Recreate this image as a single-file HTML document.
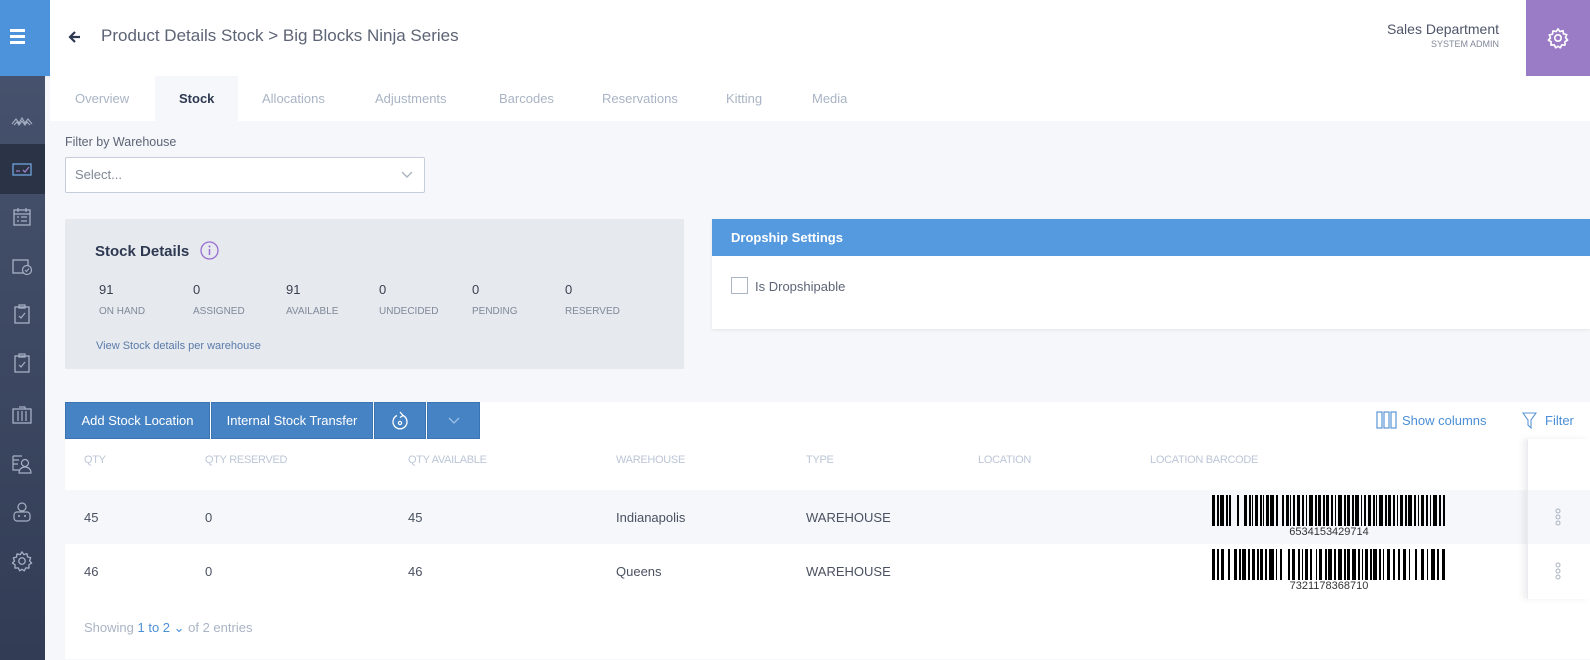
<!DOCTYPE html>
<html><head><meta charset="utf-8">
<style>
*{margin:0;padding:0;box-sizing:border-box}
body{width:1590px;height:660px;overflow:hidden;background:#f5f7fa;font-family:"Liberation Sans",sans-serif;position:relative;color:#4a5160}
.a{position:absolute;white-space:nowrap}
.side{left:0;top:76px;width:45px;height:584px;background:linear-gradient(#46526d,#323c55)}
.ico{position:absolute;left:11px;width:22px;height:22px}
.tab{top:91px;font-size:13px;color:#a9b4c4}
.th{top:454px;font-size:11px;color:#bcc6d6;letter-spacing:-0.3px}
.td{font-size:13px;color:#4a5160}
.lbl{top:306px;font-size:10px;color:#808898}
.val{top:282px;font-size:13px;color:#3a4050}
.btn{top:402px;height:37px;background:#4683c4;color:#fff;font-size:13px;display:flex;align-items:center;justify-content:center;border:1px solid #3a74b3}
</style></head><body>
<!-- header -->
<div class="a" style="left:0;top:0;width:1590px;height:76px;background:#fff;box-shadow:0 2px 4px rgba(0,0,0,.06)"></div>
<div class="a" style="left:0;top:0;width:50px;height:76px;background:#4d93db"></div>
<div class="a" style="left:10px;top:29px;width:15px;height:3px;background:#fff;box-shadow:0 6px 0 #fff,0 12px 0 #fff"></div>
<svg class="a" style="left:68px;top:30px" width="14" height="14" viewBox="0 0 14 14"><path d="M12 7H3M7 2L2 7l5 5" stroke="#2e3850" stroke-width="2.2" fill="none"/></svg>
<div class="a" style="left:101px;top:26px;font-size:17px;color:#5d6475">Product Details Stock &gt; Big Blocks Ninja Series</div>
<div class="a" style="right:91px;top:21px;font-size:14px;color:#4e5568;text-align:right">Sales Department</div>
<div class="a" style="right:91px;top:39px;font-size:9px;color:#808898">SYSTEM ADMIN</div>
<div class="a" style="left:1526px;top:0;width:64px;height:76px;background:#9a7cc6"></div>
<svg class="a" style="left:1547px;top:27px" width="22" height="22" viewBox="0 0 24 24"><path d="M12 2l2 3 3.5-1 .5 3.5 3.5.8-1.3 3.4 2.3 2.6-3 1.8.2 3.6-3.6-.2-1.6 3.2L12 21l-2.5 1.7-1.6-3.2-3.6.2.2-3.6-3-1.8L3.8 12 2.5 8.6 6 7.8 6.5 4.3 10 5z" fill="none" stroke="#fff" stroke-width="1.8" stroke-linejoin="round"/><circle cx="12" cy="12" r="3.5" fill="none" stroke="#fff" stroke-width="1.8"/></svg>
<!-- sidebar -->
<div class="a side"></div>
<div class="a" style="left:0;top:144px;width:45px;height:50px;background:#2b3347"></div>
<svg class="ico" style="top:110px" viewBox="0 0 22 22"><path d="M1 14l4-5 3 4 3-5 3 5 3-4 4 5M3 15l3-3 2 3 3-4 3 4 2-3 3 3" stroke="#a6b0c4" stroke-width="1.1" fill="none"/></svg>
<svg class="ico" style="top:158px" viewBox="0 0 22 22"><rect x="2" y="6" width="18" height="11" fill="none" stroke="#6fa3de" stroke-width="1.3"/><path d="M5 13h4M12 12l2 2 4-5" stroke="#9a7cc6" stroke-width="1.3" fill="none"/></svg>
<svg class="ico" style="top:206px" viewBox="0 0 22 22"><rect x="3" y="4" width="16" height="15" fill="none" stroke="#a6b0c4" stroke-width="1.3"/><path d="M3 8h16M7 2v4M15 2v4M6 11h2M10 11h6M6 15h2M10 15h6" stroke="#a6b0c4" stroke-width="1.2"/></svg>
<svg class="ico" style="top:255px" viewBox="0 0 22 22"><rect x="2" y="5" width="15" height="13" fill="none" stroke="#a6b0c4" stroke-width="1.3"/><circle cx="16" cy="15" r="4.5" fill="#3e4a64" stroke="#a6b0c4" stroke-width="1.2"/><path d="M14 15l1.5 1.5 2.5-3" stroke="#a6b0c4" fill="none"/></svg>
<svg class="ico" style="top:303px" viewBox="0 0 22 22"><rect x="4" y="4" width="14" height="16" fill="none" stroke="#a6b0c4" stroke-width="1.3"/><path d="M8 2h6v3H8zM8 13l2 2 4-5" stroke="#a6b0c4" stroke-width="1.2" fill="none"/></svg>
<svg class="ico" style="top:352px" viewBox="0 0 22 22"><rect x="4" y="4" width="14" height="16" fill="none" stroke="#a6b0c4" stroke-width="1.3"/><path d="M8 2h6v3H8zM8 13l2 2 4-5" stroke="#a6b0c4" stroke-width="1.2" fill="none"/></svg>
<svg class="ico" style="top:404px" viewBox="0 0 22 22"><rect x="2" y="5" width="18" height="14" fill="none" stroke="#a6b0c4" stroke-width="1.3"/><path d="M8 3h6v2M7 7v10M11 7v10M15 7v10" stroke="#a6b0c4" stroke-width="1.2" fill="none"/></svg>
<svg class="ico" style="top:453px" viewBox="0 0 22 22"><path d="M2 3h9M2 3v14h6M2 7h6M2 11h5" stroke="#a6b0c4" stroke-width="1.2" fill="none"/><circle cx="14" cy="10" r="3.5" fill="none" stroke="#a6b0c4" stroke-width="1.2"/><path d="M8 20c0-4 3-6 6-6s6 2 6 6z" fill="none" stroke="#a6b0c4" stroke-width="1.2"/></svg>
<svg class="ico" style="top:501px" viewBox="0 0 22 22"><circle cx="11" cy="6" r="4" fill="none" stroke="#a6b0c4" stroke-width="1.2"/><rect x="3" y="11" width="16" height="9" rx="3" fill="none" stroke="#a6b0c4" stroke-width="1.2"/><path d="M7 15h2M13 15h2" stroke="#a6b0c4" stroke-width="1.4"/></svg>
<svg class="ico" style="top:550px" viewBox="0 0 24 24"><path d="M12 2l2 3 3.5-1 .5 3.5 3.5.8-1.3 3.4 2.3 2.6-3 1.8.2 3.6-3.6-.2-1.6 3.2L12 21l-2.5 1.7-1.6-3.2-3.6.2.2-3.6-3-1.8L3.8 12 2.5 8.6 6 7.8 6.5 4.3 10 5z" fill="none" stroke="#a6b0c4" stroke-width="1.4" stroke-linejoin="round"/><circle cx="12" cy="12" r="3.5" fill="none" stroke="#a6b0c4" stroke-width="1.4"/></svg>
<!-- tabs -->
<div class="a" style="left:50px;top:76px;width:1540px;height:45px;background:#fff"></div>
<div class="a" style="left:155px;top:76px;width:83px;height:45px;background:#f5f7fa"></div>
<div class="a tab" style="left:75px">Overview</div>
<div class="a tab" style="left:179px;color:#2e3850;font-weight:bold">Stock</div>
<div class="a tab" style="left:262px">Allocations</div>
<div class="a tab" style="left:375px">Adjustments</div>
<div class="a tab" style="left:499px">Barcodes</div>
<div class="a tab" style="left:602px">Reservations</div>
<div class="a tab" style="left:726px">Kitting</div>
<div class="a tab" style="left:812px">Media</div>
<!-- filter -->
<div class="a" style="left:65px;top:135px;font-size:12.5px;color:#5d6475">Filter by Warehouse</div>
<div class="a" style="left:65px;top:157px;width:360px;height:36px;background:#fff;border:1px solid #c4cdd9;border-radius:2px"></div>
<div class="a" style="left:75px;top:167px;font-size:13px;color:#7f8796">Select...</div>
<svg class="a" style="left:401px;top:171px" width="12" height="8"><path d="M1 1l5 5 5-5" stroke="#aab3c0" stroke-width="1.4" fill="none"/></svg>
<!-- stock details -->
<div class="a" style="left:65px;top:219px;width:619px;height:150px;background:#e6eaef"></div>
<div class="a" style="left:95px;top:243px;font-size:15px;font-weight:bold;color:#2e3850">Stock Details</div>
<svg class="a" style="left:200px;top:241px" width="19" height="19"><circle cx="9.5" cy="9.5" r="8.5" fill="none" stroke="#9a6fd0" stroke-width="1.3"/><path d="M9.5 8v6" stroke="#9a6fd0" stroke-width="1.5"/><circle cx="9.5" cy="5.5" r="1" fill="#9a6fd0"/></svg>
<div class="a val" style="left:99px">91</div><div class="a lbl" style="left:99px">ON HAND</div>
<div class="a val" style="left:193px">0</div><div class="a lbl" style="left:193px">ASSIGNED</div>
<div class="a val" style="left:286px">91</div><div class="a lbl" style="left:286px">AVAILABLE</div>
<div class="a val" style="left:379px">0</div><div class="a lbl" style="left:379px">UNDECIDED</div>
<div class="a val" style="left:472px">0</div><div class="a lbl" style="left:472px">PENDING</div>
<div class="a val" style="left:565px">0</div><div class="a lbl" style="left:565px">RESERVED</div>
<div class="a" style="left:96px;top:340px;font-size:11px;color:#5a7aa8">View Stock details per warehouse</div>
<!-- dropship -->
<div class="a" style="left:712px;top:219px;width:878px;height:110px;background:#fff;box-shadow:0 1px 3px rgba(0,0,0,.08)"></div>
<div class="a" style="left:712px;top:219px;width:878px;height:37px;background:#559ade"></div>
<div class="a" style="left:731px;top:230px;font-size:13px;font-weight:bold;color:#fff">Dropship Settings</div>
<div class="a" style="left:731px;top:277px;width:17px;height:17px;border:1px solid #a9b4c4;background:#fff"></div>
<div class="a" style="left:755px;top:279px;font-size:13px;color:#5d6475">Is Dropshipable</div>
<!-- toolbar -->
<div class="a" style="left:65px;top:402px;width:1525px;height:37px;background:#fff"></div>
<div class="a btn" style="left:65px;width:145px">Add Stock Location</div>
<div class="a btn" style="left:211px;width:162px">Internal Stock Transfer</div>
<div class="a btn" style="left:374px;width:52px"><svg width="20" height="22" viewBox="0 0 20 22"><path d="M13 5.5A7 7 0 1 1 7 5.5" stroke="#fff" stroke-width="1.3" fill="none"/><path d="M10 2l3 3.5-3 2" stroke="#fff" stroke-width="1.3" fill="none"/><circle cx="10" cy="13" r="1.6" fill="none" stroke="#fff" stroke-width="1.2"/></svg></div>
<div class="a btn" style="left:427px;width:53px"><svg width="12" height="8"><path d="M1 1l5 5 5-5" stroke="#9fc0e6" stroke-width="1.3" fill="none"/></svg></div>
<svg class="a" style="left:1376px;top:411px" width="21" height="18"><rect x="1" y="1" width="5" height="16" fill="none" stroke="#5a95d6" stroke-width="1.2"/><rect x="8" y="1" width="5" height="16" fill="none" stroke="#5a95d6" stroke-width="1.2"/><rect x="15" y="1" width="5" height="16" fill="none" stroke="#5a95d6" stroke-width="1.2"/></svg>
<div class="a" style="left:1402px;top:413px;font-size:13px;color:#4b8fd6">Show columns</div>
<svg class="a" style="left:1522px;top:412px" width="15" height="17"><path d="M1 1h13L9 8v8L6 13V8z" fill="none" stroke="#5a95d6" stroke-width="1.1"/></svg>
<div class="a" style="left:1545px;top:413px;font-size:13px;color:#4b8fd6">Filter</div>
<!-- table -->
<div class="a" style="left:65px;top:439px;width:1525px;height:220px;background:#fff"></div>
<div class="a" style="left:65px;top:490px;width:1525px;height:54px;background:#f5f7fb"></div>
<div class="a" style="left:1527px;top:439px;width:63px;height:160px;background:transparent;box-shadow:-4px 0 6px rgba(0,0,0,.07);border-left:1px solid #e8ebf0"></div>
<div class="a th" style="left:84px">QTY</div>
<div class="a th" style="left:205px">QTY RESERVED</div>
<div class="a th" style="left:408px">QTY AVAILABLE</div>
<div class="a th" style="left:616px">WAREHOUSE</div>
<div class="a th" style="left:806px">TYPE</div>
<div class="a th" style="left:978px">LOCATION</div>
<div class="a th" style="left:1150px">LOCATION BARCODE</div>
<div class="a td" style="left:84px;top:510px">45</div><div class="a td" style="left:205px;top:510px">0</div><div class="a td" style="left:408px;top:510px">45</div><div class="a td" style="left:616px;top:510px">Indianapolis</div><div class="a td" style="left:806px;top:510px">WAREHOUSE</div>
<div class="a td" style="left:84px;top:564px">46</div><div class="a td" style="left:205px;top:564px">0</div><div class="a td" style="left:408px;top:564px">46</div><div class="a td" style="left:616px;top:564px">Queens</div><div class="a td" style="left:806px;top:564px">WAREHOUSE</div>
<svg class="a" style="left:1212px;top:495px" width="234" height="31"><g fill="#000"><rect x="0" width="3" height="31"/><rect x="5" width="2" height="31"/><rect x="8" width="4" height="31"/><rect x="14" width="2" height="31"/><rect x="17" width="2" height="31"/><rect x="25" width="2" height="31"/><rect x="32" width="3" height="31"/><rect x="37" width="2" height="31"/><rect x="40" width="1" height="31"/><rect x="43" width="3" height="31"/><rect x="48" width="2" height="31"/><rect x="51" width="1" height="31"/><rect x="54" width="3" height="31"/><rect x="58" width="4" height="31"/><rect x="64" width="2" height="31"/><rect x="70" width="2" height="31"/><rect x="74" width="3" height="31"/><rect x="78" width="1" height="31"/><rect x="81" width="2" height="31"/><rect x="85" width="3" height="31"/><rect x="90" width="2" height="31"/><rect x="94" width="1" height="31"/><rect x="97" width="4" height="31"/><rect x="103" width="2" height="31"/><rect x="106" width="3" height="31"/><rect x="111" width="2" height="31"/><rect x="114" width="3" height="31"/><rect x="119" width="2" height="31"/><rect x="123" width="1" height="31"/><rect x="126" width="4" height="31"/><rect x="132" width="2" height="31"/><rect x="135" width="3" height="31"/><rect x="140" width="2" height="31"/><rect x="143" width="4" height="31"/><rect x="149" width="1" height="31"/><rect x="152" width="2" height="31"/><rect x="156" width="3" height="31"/><rect x="161" width="2" height="31"/><rect x="164" width="1" height="31"/><rect x="167" width="4" height="31"/><rect x="173" width="2" height="31"/><rect x="176" width="3" height="31"/><rect x="181" width="2" height="31"/><rect x="185" width="1" height="31"/><rect x="188" width="3" height="31"/><rect x="193" width="2" height="31"/><rect x="196" width="4" height="31"/><rect x="202" width="2" height="31"/><rect x="206" width="1" height="31"/><rect x="209" width="3" height="31"/><rect x="214" width="2" height="31"/><rect x="218" width="1" height="31"/><rect x="221" width="4" height="31"/><rect x="227" width="2" height="31"/><rect x="231" width="2" height="31"/></g></svg>
<div class="a" style="left:1212px;top:526px;width:234px;text-align:center;font-size:11px;color:#333">6534153429714</div>
<svg class="a" style="left:1212px;top:549px" width="234" height="31"><g fill="#000"><rect x="0" width="3" height="31"/><rect x="5" width="2" height="31"/><rect x="9" width="3" height="31"/><rect x="16" width="2" height="31"/><rect x="22" width="3" height="31"/><rect x="27" width="2" height="31"/><rect x="30" width="4" height="31"/><rect x="36" width="2" height="31"/><rect x="40" width="3" height="31"/><rect x="45" width="2" height="31"/><rect x="48" width="3" height="31"/><rect x="53" width="2" height="31"/><rect x="57" width="5" height="31"/><rect x="64" width="1" height="31"/><rect x="68" width="2" height="31"/><rect x="76" width="2" height="31"/><rect x="80" width="3" height="31"/><rect x="86" width="2" height="31"/><rect x="90" width="1" height="31"/><rect x="93" width="3" height="31"/><rect x="98" width="2" height="31"/><rect x="104" width="1" height="31"/><rect x="107" width="3" height="31"/><rect x="113" width="2" height="31"/><rect x="116" width="4" height="31"/><rect x="122" width="2" height="31"/><rect x="126" width="4" height="31"/><rect x="132" width="2" height="31"/><rect x="135" width="3" height="31"/><rect x="140" width="4" height="31"/><rect x="146" width="2" height="31"/><rect x="150" width="1" height="31"/><rect x="153" width="3" height="31"/><rect x="158" width="2" height="31"/><rect x="161" width="4" height="31"/><rect x="167" width="2" height="31"/><rect x="171" width="1" height="31"/><rect x="175" width="3" height="31"/><rect x="181" width="2" height="31"/><rect x="186" width="2" height="31"/><rect x="191" width="3" height="31"/><rect x="197" width="1" height="31"/><rect x="203" width="2" height="31"/><rect x="209" width="3" height="31"/><rect x="215" width="1" height="31"/><rect x="219" width="4" height="31"/><rect x="225" width="2" height="31"/><rect x="230" width="3" height="31"/></g></svg>
<div class="a" style="left:1212px;top:580px;width:234px;text-align:center;font-size:11px;color:#333">7321178368710</div>
<svg class="a" style="left:1554px;top:508px" width="8" height="18"><g fill="none" stroke="#aab3c0" stroke-width="1"><circle cx="4" cy="3" r="2"/><circle cx="4" cy="9" r="2"/><circle cx="4" cy="15" r="2"/></g></svg>
<svg class="a" style="left:1554px;top:562px" width="8" height="18"><g fill="none" stroke="#aab3c0" stroke-width="1"><circle cx="4" cy="3" r="2"/><circle cx="4" cy="9" r="2"/><circle cx="4" cy="15" r="2"/></g></svg>
<div class="a" style="left:84px;top:620px;font-size:13px;color:#a9b4c4">Showing <span style="color:#4b8fd6">1 to 2 ⌄</span> of 2 entries</div>
</body></html>
